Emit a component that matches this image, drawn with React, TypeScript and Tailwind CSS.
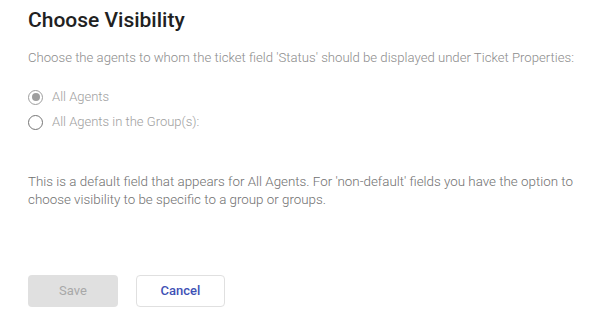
import React from "react";

export default function App() {
  return (
    <div className="w-[602px] h-[332px] bg-white px-[28px] pt-[8px]" style={{ fontFamily: "Roboto, sans-serif" }}>
      <h1 className="text-[21px] leading-[24px] font-medium text-[#212121]">Choose Visibility</h1>
      <p className="mt-[17px] text-[13.15px] leading-[18px] font-light text-[#8c8c8c]">
        Choose the agents to whom the ticket field 'Status' should be displayed under Ticket Properties:
      </p>
      <div className="mt-[22px] flex flex-col gap-[9px]">
        <label className="flex items-center gap-[9px] h-[16px]">
          <span className="w-[15px] h-[15px] rounded-full border-[1.5px] border-[#9e9e9e] flex items-center justify-center">
            <span className="w-[8px] h-[8px] rounded-full bg-[#9e9e9e]" />
          </span>
          <span className="text-[13px] font-light text-[#9e9e9e]">All Agents</span>
        </label>
        <label className="flex items-center gap-[9px] h-[16px]">
          <span className="w-[15px] h-[15px] rounded-full border-[1.5px] border-[#757575]" />
          <span className="text-[13px] font-light text-[#9e9e9e]">All Agents in the Group(s):</span>
        </label>
      </div>
      <p className="mt-[43px] text-[13.35px] leading-[18px] font-light text-[#707070]">
        This is a default field that appears for All Agents. For 'non-default' fields you have the option to
        <br />
        choose visibility to be specific to a group or groups.
      </p>
      <div className="mt-[66px] flex gap-[18px]">
        <button className="w-[90px] h-[32px] rounded-[4px] bg-[#e0e0e0] text-[13px] text-[#a8a8a8]">Save</button>
        <button className="w-[89px] h-[32px] rounded-[4px] border border-[#e0e0e0] bg-white text-[13px] font-medium text-[#3f51b5]">Cancel</button>
      </div>
    </div>
  );
}
